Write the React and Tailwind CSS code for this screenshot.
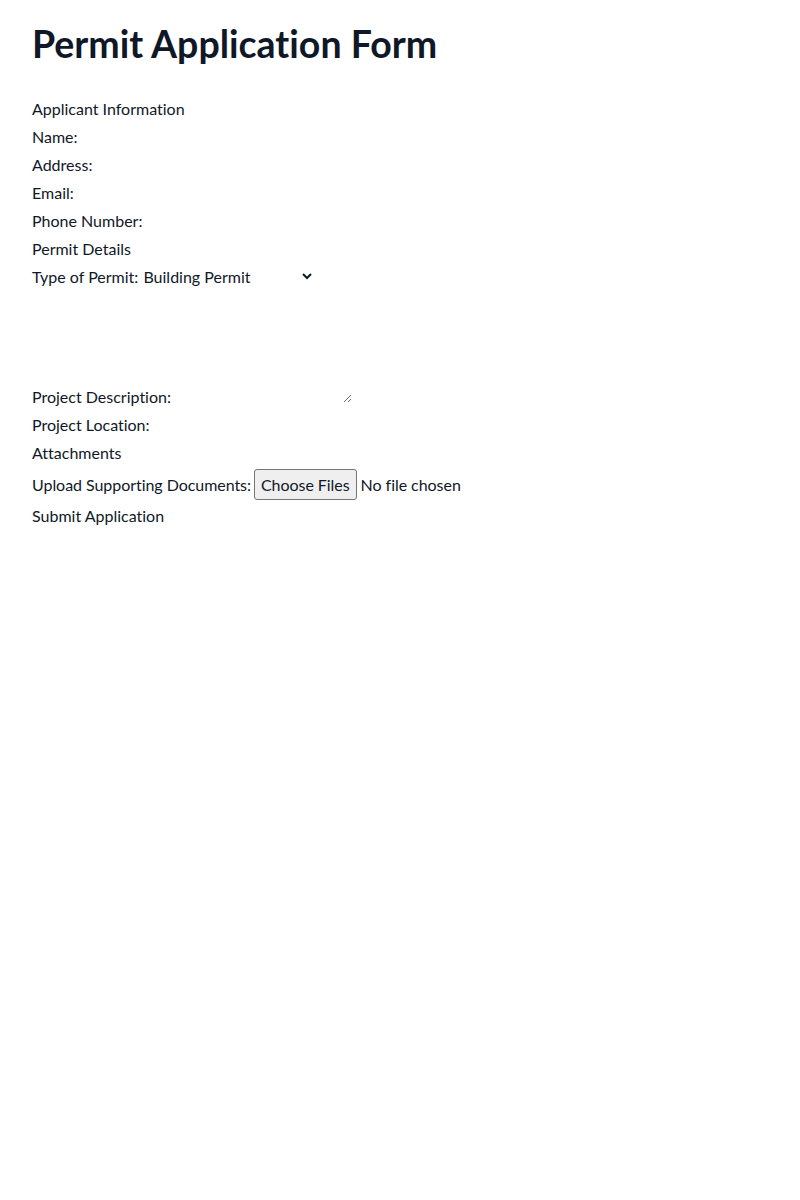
import React from "react";

function App() {
  return (
    <div className="min-h-screen bg-white px-8 py-6 text-gray-900 font-['Lato',sans-serif] [font-variant-ligatures:no-common-ligatures]">
      <h1 className="text-[37.5px] leading-10 font-bold mb-[33px]">Permit Application Form</h1>
      <form className="flex flex-col gap-1">
        {/* Applicant */}
        <h2>Applicant Information</h2>
        <div>
          <label htmlFor="name">Name: </label>
          <input id="name" type="text" className="outline-none" />
        </div>
        <div>
          <label htmlFor="address">Address: </label>
          <input id="address" type="text" className="outline-none" />
        </div>
        <div>
          <label htmlFor="email">Email: </label>
          <input id="email" type="email" className="outline-none" />
        </div>
        <div>
          <label htmlFor="phone">Phone Number: </label>
          <input id="phone" type="tel" className="outline-none" />
        </div>

        {/* Permit */}
        <h2>Permit Details</h2>
        <div>
          <label htmlFor="permitType">Type of Permit: </label>
          <select id="permitType" className="outline-none -ml-[3px] w-[176px]">
            <option>Building Permit</option>
            <option>Electrical Permit</option>
            <option>Plumbing Permit</option>
            <option>Environmental Permit</option>
          </select>
        </div>
        <div>
          <label htmlFor="description">Project Description: </label>
          <textarea id="description" rows={4} className="outline-none w-[177px] h-[110px]" />
        </div>
        <div>
          <label htmlFor="location">Project Location: </label>
          <input id="location" type="text" className="outline-none" />
        </div>

        {/* Attachments */}
        <h2>Attachments</h2>
        <div className="tracking-[-0.05px]">
          <label htmlFor="docs">Upload Supporting Documents: </label>
          <input
            id="docs"
            type="file"
            multiple
            className="-ml-[1px] file:mr-1 file:px-[6px] file:py-[2.5px] file:border file:border-[#767676] file:bg-[#efefef] file:rounded-[3px]"
          />
        </div>
        <div>
          <button type="submit">Submit Application</button>
        </div>
      </form>
    </div>
  );
}

export default App;
